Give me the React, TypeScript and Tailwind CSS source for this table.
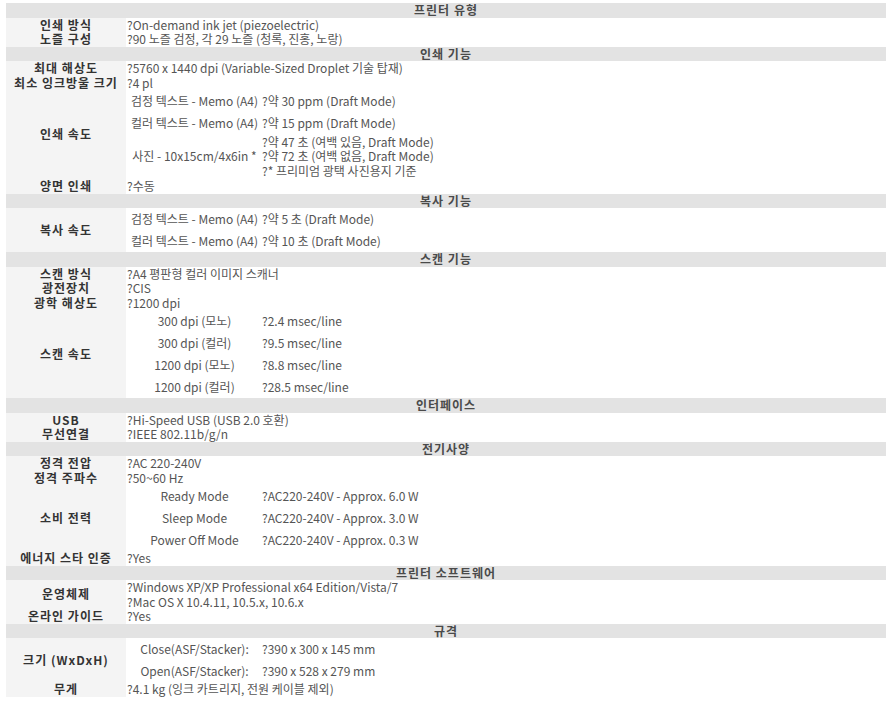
import React from "react";

type Line = string;

const Header = ({ title }: { title: string }) => (
  <div className="h-[14.5px] bg-[#e3e3e3] text-center font-bold leading-[14.5px] tracking-[1px] text-[#4a4a4a]">
    {title}
  </div>
);

const Row = ({
  label,
  children,
}: {
  label: string;
  children: React.ReactNode;
}) => (
  <div className="flex">
    <div className="flex w-[120px] shrink-0 items-center justify-center bg-[#f4f4f4] font-bold tracking-[1px] text-[#333]">
      {label}
    </div>
    <div className="flex-1 pl-px text-[#555]">{children}</div>
  </div>
);

const Simple = ({ lines }: { lines: Line[] }) => (
  <div className="flex flex-col">
    {lines.map((l) => (
      <div key={l} className="h-[14.5px] whitespace-nowrap leading-[14.5px]">
        {l}
      </div>
    ))}
  </div>
);

const Nested = ({ rows }: { rows: { left: string; right: string[] }[] }) => (
  <div className="flex flex-col">
    {rows.map((r) => (
      <div
        key={r.left}
        className={
          r.right.length > 1
            ? "flex h-[45px] items-center"
            : "flex h-[22px] items-center"
        }
      >
        <div className="w-[135px] shrink-0 whitespace-nowrap text-center">
          {r.left}
        </div>
        <div className="flex flex-col">
          {r.right.map((t) => (
            <div key={t} className="h-[14.5px] whitespace-nowrap leading-[14.5px]">
              {t}
            </div>
          ))}
        </div>
      </div>
    ))}
  </div>
);

export default function App() {
  return (
    <div className="min-h-[707px] bg-white pl-[6px] pt-[3px] font-['Noto_Sans_CJK_KR','Noto_Sans',sans-serif] text-[12px] leading-[14.5px]">
      <div className="flex w-[880px] flex-col">
        <Header title="프린터 유형" />
        <Row label="인쇄 방식">
          <Simple lines={["?On-demand ink jet (piezoelectric)"]} />
        </Row>
        <Row label="노즐 구성">
          <Simple lines={["?90 노즐 검정, 각 29 노즐 (청록, 진홍, 노랑)"]} />
        </Row>

        <Header title="인쇄 기능" />
        <Row label="최대 해상도">
          <Simple lines={["?5760 x 1440 dpi (Variable-Sized Droplet 기술 탑재)"]} />
        </Row>
        <Row label="최소 잉크방울 크기">
          <Simple lines={["?4 pl"]} />
        </Row>
        <Row label="인쇄 속도">
          <Nested
            rows={[
              { left: "검정 텍스트 - Memo (A4)", right: ["?약 30 ppm (Draft Mode)"] },
              { left: "컬러 텍스트 - Memo (A4)", right: ["?약 15 ppm (Draft Mode)"] },
              {
                left: "사진 - 10x15cm/4x6in *",
                right: [
                  "?약 47 초 (여백 있음, Draft Mode)",
                  "?약 72 초 (여백 없음, Draft Mode)",
                  "?* 프리미엄 광택 사진용지 기준",
                ],
              },
            ]}
          />
        </Row>
        <Row label="양면 인쇄">
          <Simple lines={["?수동"]} />
        </Row>

        <Header title="복사 기능" />
        <Row label="복사 속도">
          <Nested
            rows={[
              { left: "검정 텍스트 - Memo (A4)", right: ["?약 5 초 (Draft Mode)"] },
              { left: "컬러 텍스트 - Memo (A4)", right: ["?약 10 초 (Draft Mode)"] },
            ]}
          />
        </Row>

        <Header title="스캔 기능" />
        <Row label="스캔 방식">
          <Simple lines={["?A4 평판형 컬러 이미지 스캐너"]} />
        </Row>
        <Row label="광전장치">
          <Simple lines={["?CIS"]} />
        </Row>
        <Row label="광학 해상도">
          <Simple lines={["?1200 dpi"]} />
        </Row>
        <Row label="스캔 속도">
          <Nested
            rows={[
              { left: "300 dpi (모노)", right: ["?2.4 msec/line"] },
              { left: "300 dpi (컬러)", right: ["?9.5 msec/line"] },
              { left: "1200 dpi (모노)", right: ["?8.8 msec/line"] },
              { left: "1200 dpi (컬러)", right: ["?28.5 msec/line"] },
            ]}
          />
        </Row>

        <Header title="인터페이스" />
        <Row label="USB">
          <Simple lines={["?Hi-Speed USB (USB 2.0 호환)"]} />
        </Row>
        <Row label="무선연결">
          <Simple lines={["?IEEE 802.11b/g/n"]} />
        </Row>

        <Header title="전기사양" />
        <Row label="정격 전압">
          <Simple lines={["?AC 220-240V"]} />
        </Row>
        <Row label="정격 주파수">
          <Simple lines={["?50~60 Hz"]} />
        </Row>
        <Row label="소비 전력">
          <Nested
            rows={[
              { left: "Ready Mode", right: ["?AC220-240V - Approx. 6.0 W"] },
              { left: "Sleep Mode", right: ["?AC220-240V - Approx. 3.0 W"] },
              { left: "Power Off Mode", right: ["?AC220-240V - Approx. 0.3 W"] },
            ]}
          />
        </Row>
        <Row label="에너지 스타 인증">
          <Simple lines={["?Yes"]} />
        </Row>

        <Header title="프린터 소프트웨어" />
        <Row label="운영체제">
          <Simple
            lines={[
              "?Windows XP/XP Professional x64 Edition/Vista/7",
              "?Mac OS X 10.4.11, 10.5.x, 10.6.x",
            ]}
          />
        </Row>
        <Row label="온라인 가이드">
          <Simple lines={["?Yes"]} />
        </Row>

        <Header title="규격" />
        <Row label="크기 (WxDxH)">
          <Nested
            rows={[
              { left: "Close(ASF/Stacker):", right: ["?390 x 300 x 145 mm"] },
              { left: "Open(ASF/Stacker):", right: ["?390 x 528 x 279 mm"] },
            ]}
          />
        </Row>
        <Row label="무게">
          <Simple lines={["?4.1 kg (잉크 카트리지, 전원 케이블 제외)"]} />
        </Row>
      </div>
    </div>
  );
}
